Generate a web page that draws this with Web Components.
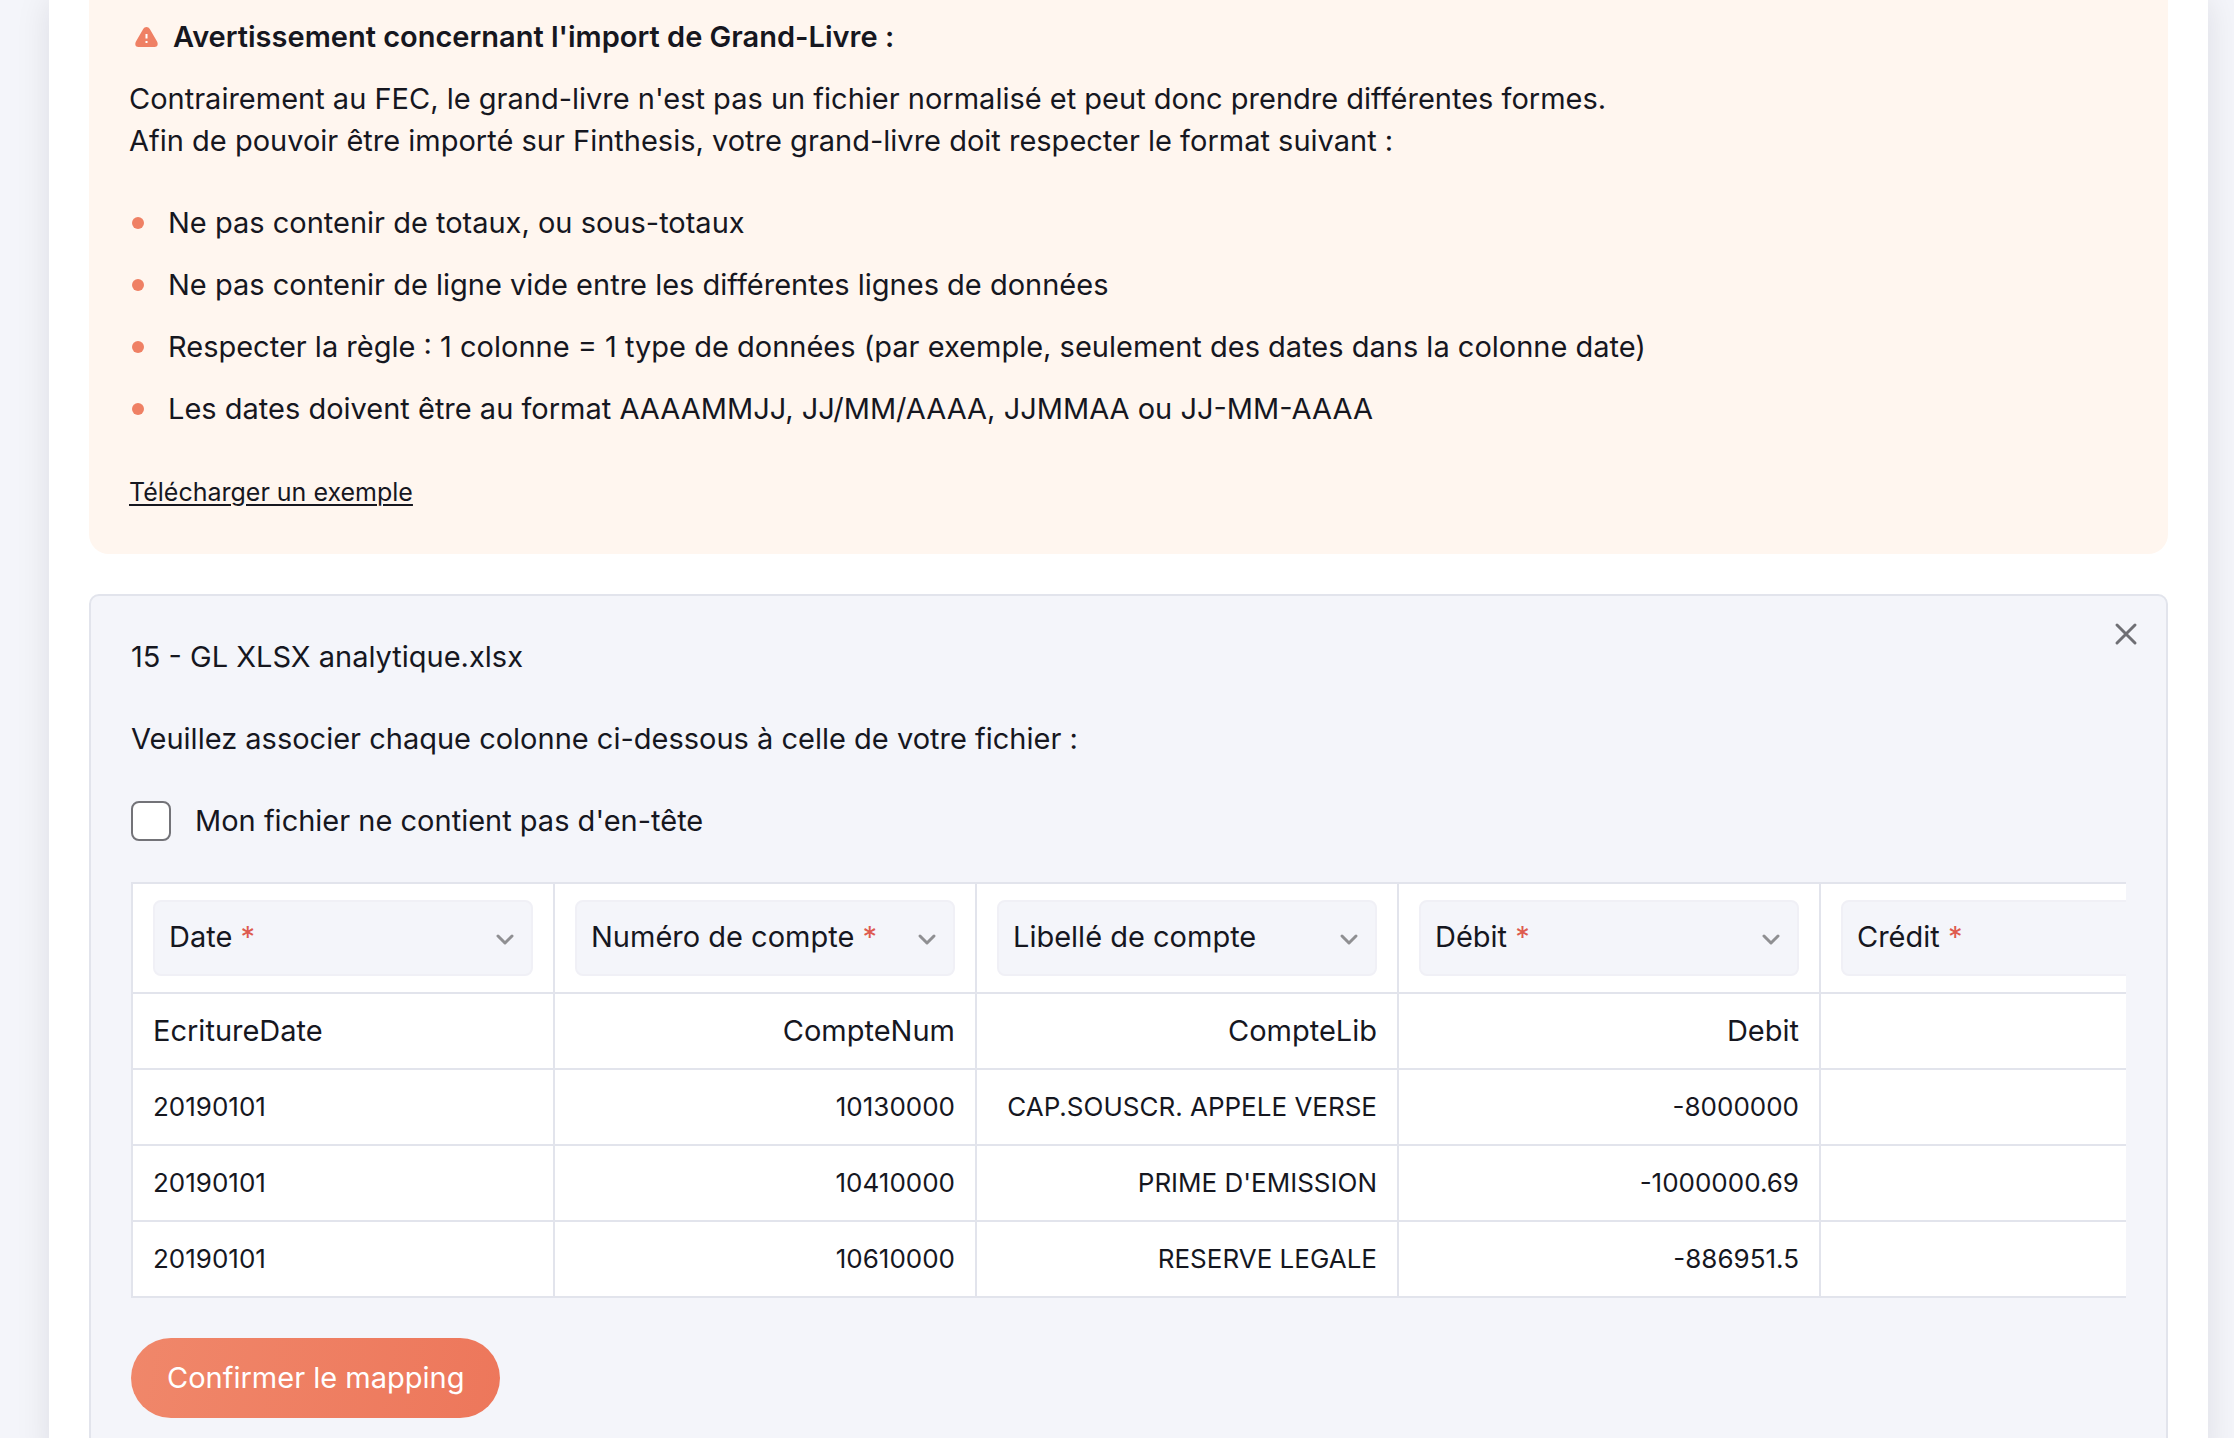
<!DOCTYPE html>
<html lang="fr">
<head>
<meta charset="utf-8">
<meta name="viewport" content="width=device-width, initial-scale=1">
<title>Import de Grand-Livre</title>
<style>
  :root {
    --ink: #16171f;
    --accent: #ef8064;
    --surface: #f4f5fa;
    --line: #e2e4ec;
    --cream: #fff6ef;
    --text: 29px;
    --text-data: 26px;
    --text-small: 25px;
    --row: 42px;
  }
  * {
    box-sizing: border-box;
  }
  body {
    margin: 0;
    height: 100vh;
    overflow: hidden;
    background: var(--surface);
    color: var(--ink);
    font: 400 var(--text)/var(--row) Inter, "Open Sans", sans-serif;
  }
</style>
</head>
<body>

<import-sheet>
  <import-notice>
    <span slot="title">Avertissement concernant l'import de Grand-Livre :</span>
    <span slot="intro">Contrairement au FEC, le grand-livre n'est pas un fichier normalisé et peut donc prendre différentes formes.<br>Afin de pouvoir être importé sur Finthesis, votre grand-livre doit respecter le format suivant :</span>
    <notice-rule>Ne pas contenir de totaux, ou sous-totaux</notice-rule>
    <notice-rule>Ne pas contenir de ligne vide entre les différentes lignes de données</notice-rule>
    <notice-rule>Respecter la règle : 1 colonne = 1 type de données (par exemple, seulement des dates dans la colonne date)</notice-rule>
    <notice-rule>Les dates doivent être au format AAAAMMJJ, JJ/MM/AAAA, JJMMAA ou JJ-MM-AAAA</notice-rule>
    <span slot="link">Télécharger un exemple</span>
  </import-notice>

  <mapping-panel>
    <span slot="file">15 - GL XLSX analytique.xlsx</span>
    <span slot="hint">Veuillez associer chaque colonne ci-dessous à celle de votre fichier :</span>
    <check-field>Mon fichier ne contient pas d'en-tête</check-field>
    <mapping-table></mapping-table>
    <pill-button slot="action">Confirmer le mapping</pill-button>
  </mapping-panel>
</import-sheet>

<script>
// Attach an open shadow root filled with the given markup
function render(host, html) {
  const template = document.createElement("template")
  template.innerHTML = `<style>* { box-sizing: border-box; }</style>${html}`
  host.attachShadow({ mode: "open" }).appendChild(template.content.cloneNode(true))
}

class ImportSheet extends HTMLElement {
  constructor() {
    super()
    render(this, `
      <style>
        :host {
          display: flex;
          flex-direction: column;
          gap: 40px;
          min-height: 100vh;
          margin: 0 26px 0 49px;
          padding: 0 40px;
          background: #fff;
          box-shadow: 0 0 32px rgba(22, 23, 31, 0.1);
        }
      </style>
      <slot></slot>
    `)
  }
}

class ImportNotice extends HTMLElement {
  constructor() {
    super()
    render(this, `
      <style>
        :host {
          display: block;
          padding: 16px 40px 40px;
          border-radius: 0 0 20px 20px;
          background: var(--cream);
        }
        h2 {
          display: flex;
          align-items: center;
          gap: 12px;
          margin: 0 0 20px;
          padding-left: 4px;
          font-size: inherit;
          font-weight: 600;
        }
        svg {
          width: 28px;
          height: 28px;
          flex: none;
        }
        p {
          margin: 0 0 40px;
        }
        .rules {
          display: flex;
          flex-direction: column;
          gap: 20px;
          margin-bottom: 40px;
        }
        a {
          display: block;
          width: fit-content;
          color: inherit;
          font-size: var(--text-small);
          line-height: 44px;
          text-decoration-thickness: 2px;
          text-underline-offset: 3px;
        }
      </style>
      <h2>
        <svg viewBox="0 0 28 28" aria-hidden="true">
          <path d="M13.500 4c1.400 0 2.600.7 3.300 2l7.100 12.300c1.600 2.900.7 5.700-2.200 5.700H5.300c-2.900 0-3.800-2.800-2.200-5.700L10.200 6c.7-1.300 1.900-2 3.300-2z" fill="#ef8064"/>
          <path d="M13.500 11v4.500M13.500 18v2" stroke="#fff" stroke-width="2"/>
        </svg>
        <slot name="title"></slot>
      </h2>
      <p><slot name="intro"></slot></p>
      <div class="rules" role="list"><slot></slot></div>
      <a href="#exemple"><slot name="link"></slot></a>
    `)
  }
}

class NoticeRule extends HTMLElement {
  constructor() {
    super()
    render(this, `
      <style>
        :host {
          display: flex;
          align-items: center;
          gap: 24px;
          padding-left: 3px;
        }
        :host::before {
          content: "";
          flex: none;
          width: 12px;
          height: 12px;
          border-radius: 50%;
          background: var(--accent);
        }
      </style>
      <span><slot></slot></span>
    `)
  }
  connectedCallback() {
    this.setAttribute("role", "listitem")
  }
}

class MappingPanel extends HTMLElement {
  constructor() {
    super()
    render(this, `
      <style>
        :host {
          position: relative;
          display: flex;
          flex-direction: column;
          align-items: flex-start;
          gap: 40px;
          padding: 40px;
          border: 2px solid var(--line);
          border-radius: 10px;
          background: var(--surface);
        }
        p {
          margin: 0;
        }
        .close {
          position: absolute;
          top: 18px;
          right: 20px;
          display: grid;
          place-items: center;
          width: 40px;
          height: 40px;
          padding: 0;
          border: 0;
          background: none;
          cursor: pointer;
        }
        .close svg {
          width: 24px;
          height: 24px;
        }
      </style>
      <p><slot name="file"></slot></p>
      <p><slot name="hint"></slot></p>
      <slot></slot>
      <slot name="action"></slot>
      <button class="close" type="button" aria-label="Fermer">
        <svg viewBox="0 0 24 24" fill="none" stroke="#6f6f74" stroke-width="3" stroke-linecap="round">
          <path d="M3 3l18 18M21 3L3 21"/>
        </svg>
      </button>
    `)
    this.shadowRoot.querySelector(".close").addEventListener("click", () => this.remove())
  }
}

class CheckField extends HTMLElement {
  constructor() {
    super()
    render(this, `
      <style>
        :host {
          display: block;
        }
        label {
          display: flex;
          align-items: center;
          gap: 24px;
          cursor: pointer;
        }
        input {
          appearance: none;
          width: 40px;
          height: 40px;
          margin: 0;
          border: 2px solid #737378;
          border-radius: 8px;
          background: #fff;
        }
        input:checked {
          background: var(--accent);
          box-shadow: inset 0 0 0 6px #fff;
        }
      </style>
      <label><input type="checkbox"><span><slot></slot></span></label>
    `)
  }
}

// Drop-down whose label stands inside it until a column is chosen
class ColumnSelect extends HTMLElement {
  connectedCallback() {
    if (this.shadowRoot) return
    const required = this.hasAttribute("required")
    render(this, `
      <style>
        :host {
          position: relative;
          display: block;
        }
        select {
          appearance: none;
          display: block;
          width: 100%;
          height: 76px;
          padding: 0 56px 0 16px;
          border: 2px solid #f0f0f6;
          border-radius: 8px;
          background: var(--surface);
          color: inherit;
          font: inherit;
        }
        label {
          position: absolute;
          top: 16px;
          left: 16px;
          pointer-events: none;
        }
        .chosen label {
          display: none;
        }
        .star {
          color: #de5b4f;
        }
        svg {
          position: absolute;
          top: 27px;
          right: 16px;
          width: 24px;
          height: 24px;
          pointer-events: none;
        }
      </style>
      <div>
        <select id="column" ${required ? "required" : ""}>
          <option value="" label=" "></option>
        </select>
        <label for="column">${this.getAttribute("label")}${required ? ' <span class="star">*</span>' : ""}</label>
        <svg viewBox="0 0 24 24" fill="none" stroke="#8f8f92" stroke-width="3" stroke-linecap="round" stroke-linejoin="round" aria-hidden="true">
          <path d="M5 9l7 7 7-7"/>
        </svg>
      </div>
    `)
    const select = this.shadowRoot.querySelector("select")
    select.addEventListener("change", () => {
      select.parentElement.classList.toggle("chosen", select.value !== "")
    })
  }
}

const fields = [
  { label: "Date", required: true },
  { label: "Numéro de compte", required: true },
  { label: "Libellé de compte", required: false },
  { label: "Débit", required: true },
  { label: "Crédit", required: true },
]

// The first row holds the column names found in the file
const rows = [
  ["EcritureDate", "CompteNum", "CompteLib", "Debit", ""],
  ["20190101", "10130000", "CAP.SOUSCR. APPELE VERSE", "-8000000", ""],
  ["20190101", "10410000", "PRIME D'EMISSION", "-1000000.69", ""],
  ["20190101", "10610000", "RESERVE LEGALE", "-886951.5", ""],
]

class MappingTable extends HTMLElement {
  constructor() {
    super()
    render(this, `
      <style>
        :host {
          display: block;
          width: 100%;
          overflow: hidden;
        }
        table {
          border-collapse: separate;
          border-spacing: 0;
          border-top: 2px solid var(--line);
          border-left: 2px solid var(--line);
          background: #fff;
        }
        th, td {
          min-width: 422px;
          padding: 16px 20px;
          border-right: 2px solid var(--line);
          border-bottom: 2px solid var(--line);
          font-weight: 400;
          text-align: right;
          white-space: nowrap;
        }
        th, td:first-child {
          text-align: left;
        }
        tr + tr td {
          font-size: var(--text-data);
        }
      </style>
      <table>
        <thead>
          <tr>${fields.map(f => `<th><column-select label="${f.label}" ${f.required ? "required" : ""}></column-select></th>`).join("")}</tr>
        </thead>
        <tbody>
          ${rows.map(row => `<tr>${row.map(cell => `<td>${cell}</td>`).join("")}</tr>`).join("")}
        </tbody>
      </table>
    `)
  }
}

class PillButton extends HTMLElement {
  constructor() {
    super()
    render(this, `
      <style>
        :host {
          display: block;
        }
        button {
          height: 80px;
          padding: 0 36px;
          border: 0;
          border-radius: 40px;
          background: linear-gradient(100deg, #f0876a, #ed775b);
          color: #fff;
          font: inherit;
          cursor: pointer;
        }
      </style>
      <button type="button"><slot></slot></button>
    `)
  }
}

customElements.define("import-sheet", ImportSheet)
customElements.define("import-notice", ImportNotice)
customElements.define("notice-rule", NoticeRule)
customElements.define("mapping-panel", MappingPanel)
customElements.define("check-field", CheckField)
customElements.define("column-select", ColumnSelect)
customElements.define("mapping-table", MappingTable)
customElements.define("pill-button", PillButton)
</script>
</body>
</html>
